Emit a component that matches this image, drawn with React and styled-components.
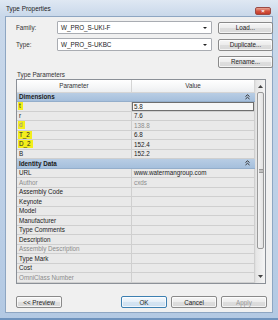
import React from "react";
import styled, { createGlobalStyle } from "styled-components";

const GlobalStyle = createGlobalStyle`
  html, body {
    margin: 0;
    padding: 0;
    background: #fff;
  }
  body {
    font-family: "Liberation Sans", Arial, sans-serif;
    font-size: 6.3px;
    color: #1e1e1e;
  }
`;

const params = [
  { group: "Dimensions" },
  { name: "t", value: "5.8", hl: true, selected: true },
  { name: "r", value: "7.6" },
  { name: "d", value: "138.8", hl: true, dim: true },
  { name: "T_2", value: "6.8", hl: true },
  { name: "D_2", value: "152.4", hl: true },
  { name: "B", value: "152.2" },
  { group: "Identity Data" },
  { name: "URL", value: "www.watermangroup.com" },
  { name: "Author", value: "cxds", dim: true },
  { name: "Assembly Code" },
  { name: "Keynote" },
  { name: "Model" },
  { name: "Manufacturer" },
  { name: "Type Comments" },
  { name: "Description" },
  { name: "Assembly Description", dim: true },
  { name: "Type Mark" },
  { name: "Cost" },
  { name: "OmniClass Number", dim: true },
];

const Window = styled.div`
  width: 278px;
  height: 320px;
  box-sizing: border-box;
  display: flex;
  flex-direction: column;
  padding: 0 5px 5px;
  background: linear-gradient(180deg, #dfe8f3 0px, #c9d8ea 16px, #bdd0e7 60%, #b3c9e3 100%);
  border-bottom: 2px solid #6f93bd;
`;

const TitleBar = styled.div`
  height: 16px;
  flex-shrink: 0;
  display: flex;
  align-items: flex-start;
  justify-content: space-between;
`;

const Title = styled.span`
  margin: 5px 0 0 1px;
  font-size: 6.4px;
  color: #222;
`;

const CloseBtn = styled.div`
  width: 16px;
  height: 8px;
  margin: 7px 2px 0 0;
  border-radius: 2px;
  border: 1px solid #9a4a44;
  box-sizing: border-box;
  background: linear-gradient(180deg, #e8a493 0%, #d2503d 55%, #c43a28 100%);
  display: flex;
  align-items: center;
  justify-content: center;
  color: #fff;
  font-size: 6px;
  font-weight: bold;
  line-height: 1;
`;

const Client = styled.div`
  flex: 1;
  background: #f0f0f0;
  border: 1px solid #8ea6c2;
  display: flex;
  flex-direction: column;
  padding: 4px 5px 0 10px;
`;

const FormGrid = styled.div`
  display: grid;
  grid-template-columns: 35px 155px 55px;
  grid-auto-rows: 13px;
  column-gap: 6px;
  row-gap: 4px;
  align-items: center;
`;

const Label = styled.span`
  color: #333;
`;

const Combo = styled.div`
  height: 13px;
  box-sizing: border-box;
  background: #fff;
  border: 1px solid #a9acb2;
  border-radius: 1px;
  display: flex;
  align-items: center;
  justify-content: space-between;
  padding: 0 4px 0 3px;
  color: #222;
`;

const Arrow = styled.span`
  width: 0;
  height: 0;
  border-left: 2px solid transparent;
  border-right: 2px solid transparent;
  border-top: 2px solid #222;
`;

const Button = styled.div`
  height: ${(p) => (p.$h ? p.$h : 12)}px;
  width: ${(p) => (p.$w ? p.$w + "px" : "auto")};
  box-sizing: border-box;
  border: 1px solid ${(p) => (p.$default ? "#3c7fb1" : "#8a8a8a")};
  border-radius: 2px;
  background: ${(p) =>
    p.$default
      ? "linear-gradient(180deg, #f4f9fd 0%, #e4eef8 50%, #d4e4f2 51%, #cfe0f0 100%)"
      : "linear-gradient(180deg, #f6f6f6 0%, #ececec 50%, #dedede 51%, #d8d8d8 100%)"};
  box-shadow: inset 0 0 0 1px rgba(255, 255, 255, 0.7);
  display: flex;
  align-items: center;
  justify-content: center;
  color: ${(p) => (p.$disabled ? "#9a9a9a" : "#222")};
`;

const SectionLabel = styled.div`
  height: 10px;
  margin-top: 1px;
  display: flex;
  align-items: center;
  padding-left: 1px;
  color: #333;
`;

const Table = styled.div`
  width: 250px;
  height: 204.5px;
  box-sizing: border-box;
  border: 1px solid #8b9097;
  display: flex;
  background: #fff;
`;

const Grid = styled.div`
  flex: 1;
  display: flex;
  flex-direction: column;
`;

const HeaderRow = styled.div`
  height: 12.5px;
  display: grid;
  grid-template-columns: 115px 1fr;
  background: linear-gradient(180deg, #ffffff 0%, #f5f6f7 60%, #eceef0 100%);
  border-bottom: 1px solid #d5d5d5;
  box-sizing: border-box;
`;

const HeaderCell = styled.div`
  display: flex;
  align-items: center;
  justify-content: center;
  color: #333;
  border-right: 1px solid #d5d5d5;
`;

const Row = styled.div`
  height: 9.5px;
  box-sizing: border-box;
  display: grid;
  grid-template-columns: 115px 1fr;
  border-bottom: 1px solid #cfcfcf;
  background: #e9e9e9;
`;

const GroupRow = styled.div`
  height: 9.5px;
  box-sizing: border-box;
  display: flex;
  align-items: center;
  justify-content: space-between;
  padding: 0 5px 0 2px;
  background: linear-gradient(180deg, #b8cde4 0%, #a5bfdc 100%);
  border-bottom: 1px solid #94aecb;
  font-weight: bold;
  color: #1a1a1a;
`;

const Cell = styled.div`
  display: flex;
  align-items: center;
  padding-left: 2px;
  overflow: hidden;
  white-space: nowrap;
  color: ${(p) => (p.$dim ? "#8c8c8c" : "#222")};
  border-right: 1px solid #cfcfcf;
  ${(p) =>
    p.$selected &&
    `
    background: #f7f7f7;
    box-shadow: inset 0 0 0 1px #6e6e6e;
  `}
`;

const Highlight = styled.span`
  display: inline-block;
  height: 8px;
  line-height: 8px;
  padding: 0 2px 0 1px;
  margin-left: -1px;
  background: #f3ee1c;
`;

const Scrollbar = styled.div`
  width: 9px;
  display: flex;
  flex-direction: column;
  align-items: center;
  background: linear-gradient(90deg, #e6e6e6, #f4f4f4);
  border-left: 1px solid #e0e0e0;
`;

const ScrollArrow = styled.div`
  height: 12px;
  display: flex;
  align-items: center;
  justify-content: center;
`;

const Thumb = styled.div`
  width: 7px;
  height: 157px;
  box-sizing: border-box;
  border: 1px solid #9a9a9a;
  border-radius: 2px;
  background: linear-gradient(90deg, #f3f3f3, #e2e2e2);
  display: flex;
  align-items: center;
  justify-content: center;
`;

const Spacer = styled.div`
  flex: 1;
`;

const Footer = styled.div`
  width: 251px;
  margin-top: 12.5px;
  display: flex;
  justify-content: space-between;
`;

const ButtonGroup = styled.div`
  display: flex;
  gap: 4px;
`;

const Chevron = () => (
  <svg width="5" height="6" viewBox="0 0 5 6">
    <path d="M0.5 2.5 L2.5 0.8 L4.5 2.5 M0.5 5 L2.5 3.3 L4.5 5" fill="none" stroke="#333" strokeWidth="1" />
  </svg>
);

const Tri = ({ up }) => (
  <svg width="5" height="3" viewBox="0 0 5 3">
    <path d={up ? "M0 3 L2.5 0 L5 3 Z" : "M0 0 L2.5 3 L5 0 Z"} fill="#444" />
  </svg>
);

const Grip = () => (
  <svg width="4" height="4" viewBox="0 0 4 4">
    <path d="M0 0.5 H4 M0 2 H4 M0 3.5 H4" stroke="#777" strokeWidth="0.7" />
  </svg>
);

export default function App() {
  return (
    <>
      <GlobalStyle />
      <Window>
        <TitleBar>
          <Title>Type Properties</Title>
          <CloseBtn>×</CloseBtn>
        </TitleBar>
        <Client>
          <FormGrid>
            <Label>Family:</Label>
            <Combo>
              W_PRO_S-UKI-F
              <Arrow />
            </Combo>
            <Button>Load...</Button>
            <Label>Type:</Label>
            <Combo>
              W_PRO_S-UKBC
              <Arrow />
            </Combo>
            <Button>Duplicate...</Button>
            <span />
            <span />
            <Button>Rename...</Button>
          </FormGrid>
          <SectionLabel>Type Parameters</SectionLabel>
          <Table>
            <Grid>
              <HeaderRow>
                <HeaderCell>Parameter</HeaderCell>
                <HeaderCell>Value</HeaderCell>
              </HeaderRow>
              {params.map((p, i) =>
                p.group ? (
                  <GroupRow key={i}>
                    {p.group}
                    <Chevron />
                  </GroupRow>
                ) : (
                  <Row key={i}>
                    <Cell $dim={p.dim}>
                      {p.hl ? <Highlight>{p.name}</Highlight> : p.name}
                    </Cell>
                    <Cell $dim={p.dim} $selected={p.selected}>
                      {p.value}
                    </Cell>
                  </Row>
                )
              )}
            </Grid>
            <Scrollbar>
              <ScrollArrow>
                <Tri up />
              </ScrollArrow>
              <Thumb>
                <Grip />
              </Thumb>
              <Spacer />
              <ScrollArrow>
                <Tri />
              </ScrollArrow>
            </Scrollbar>
          </Table>
          <Footer>
            <Button $w={46}>&lt;&lt; Preview</Button>
            <ButtonGroup>
              <Button $w={46} $default>
                OK
              </Button>
              <Button $w={46}>Cancel</Button>
              <Button $w={46} $disabled>
                Apply
              </Button>
            </ButtonGroup>
          </Footer>
        </Client>
      </Window>
    </>
  );
}
